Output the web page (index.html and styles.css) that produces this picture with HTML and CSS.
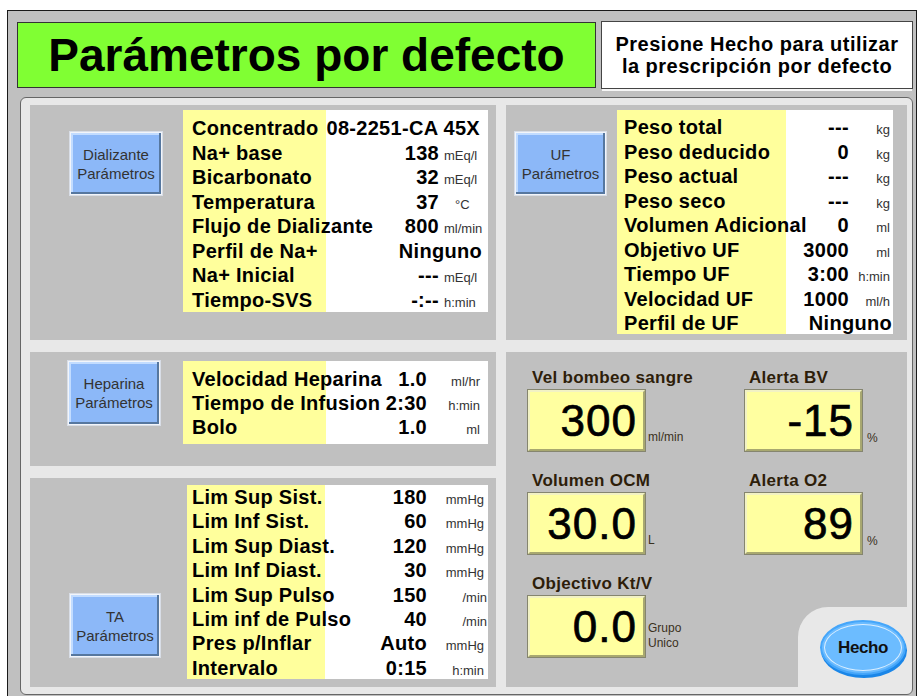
FILE: index.html
```html
<!DOCTYPE html>
<html lang="es">
<head>
<meta charset="utf-8">
<title>Parámetros por defecto</title>
<link rel="stylesheet" href="styles.css">
</head>
<body>
<div class="frame">
  <div class="header">
    <div class="title">Parámetros por defecto</div>
    <div class="hint">Presione Hecho para utilizar<br>la prescripción por defecto</div>
  </div>
  <div class="panel">
    <section class="sec dial">
      <div class="btn">Dializante<br>Parámetros</div>
      <div class="tbl">
        <div class="row"><span class="lbl">Concentrado</span><span class="val wide pr8">08-2251-CA 45X</span></div>
        <div class="row"><span class="lbl">Na+ base</span><span class="val">138</span><span class="unit">mEq/l</span></div>
        <div class="row"><span class="lbl">Bicarbonato</span><span class="val">32</span><span class="unit">mEq/l</span></div>
        <div class="row"><span class="lbl">Temperatura</span><span class="val">37</span><span class="unit deg">°C</span></div>
        <div class="row"><span class="lbl">Flujo de Dializante</span><span class="val">800</span><span class="unit">ml/min</span></div>
        <div class="row"><span class="lbl">Perfil de Na+</span><span class="val wide pr6">Ninguno</span></div>
        <div class="row"><span class="lbl">Na+ Inicial</span><span class="val">---</span><span class="unit">mEq/l</span></div>
        <div class="row"><span class="lbl">Tiempo-SVS</span><span class="val">-:--</span><span class="unit">h:min</span></div>
      </div>
    </section>

    <section class="sec uf">
      <div class="btn">UF<br>Parámetros</div>
      <div class="tbl">
        <div class="row"><span class="lbl">Peso total</span><span class="val">---</span><span class="unit">kg</span></div>
        <div class="row"><span class="lbl">Peso deducido</span><span class="val">0</span><span class="unit">kg</span></div>
        <div class="row"><span class="lbl">Peso actual</span><span class="val">---</span><span class="unit">kg</span></div>
        <div class="row"><span class="lbl">Peso seco</span><span class="val">---</span><span class="unit">kg</span></div>
        <div class="row"><span class="lbl">Volumen Adicional</span><span class="val">0</span><span class="unit">ml</span></div>
        <div class="row"><span class="lbl">Objetivo UF</span><span class="val">3000</span><span class="unit">ml</span></div>
        <div class="row"><span class="lbl">Tiempo UF</span><span class="val">3:00</span><span class="unit">h:min</span></div>
        <div class="row"><span class="lbl">Velocidad UF</span><span class="val">1000</span><span class="unit">ml/h</span></div>
        <div class="row"><span class="lbl">Perfil de UF</span><span class="val wide pr1">Ninguno</span></div>
      </div>
    </section>

    <section class="sec hep">
      <div class="btn">Heparina<br>Parámetros</div>
      <div class="tbl">
        <div class="row"><span class="lbl">Velocidad Heparina</span><span class="val">1.0</span><span class="unit">ml/hr</span></div>
        <div class="row"><span class="lbl">Tiempo de Infusion</span><span class="val">2:30</span><span class="unit">h:min</span></div>
        <div class="row"><span class="lbl">Bolo</span><span class="val">1.0</span><span class="unit">ml</span></div>
      </div>
    </section>

    <section class="sec pump">
      <div class="field">
        <div class="flabel">Vel bombeo sangre</div>
        <div class="fline"><div class="fbox">300</div><span class="funit">ml/min</span></div>
      </div>
      <div class="field">
        <div class="flabel">Alerta BV</div>
        <div class="fline"><div class="fbox">-15</div><span class="funit pct">%</span></div>
      </div>
      <div class="field">
        <div class="flabel">Volumen OCM</div>
        <div class="fline"><div class="fbox">30.0</div><span class="funit">L</span></div>
      </div>
      <div class="field">
        <div class="flabel">Alerta O2</div>
        <div class="fline"><div class="fbox">89</div><span class="funit pct">%</span></div>
      </div>
      <div class="field">
        <div class="flabel">Objectivo Kt/V</div>
        <div class="fline"><div class="fbox">0.0</div><span class="funit">Grupo<br>Unico</span></div>
      </div>
      <div class="cut"><div class="hecho">Hecho</div></div>
    </section>

    <section class="sec ta">
      <div class="btn">TA<br>Parámetros</div>
      <div class="tbl">
        <div class="row"><span class="lbl">Lim Sup Sist.</span><span class="val">180</span><span class="unit">mmHg</span></div>
        <div class="row"><span class="lbl">Lim Inf Sist.</span><span class="val">60</span><span class="unit">mmHg</span></div>
        <div class="row"><span class="lbl">Lim Sup Diast.</span><span class="val">120</span><span class="unit">mmHg</span></div>
        <div class="row"><span class="lbl">Lim Inf Diast.</span><span class="val">30</span><span class="unit">mmHg</span></div>
        <div class="row"><span class="lbl">Lim Sup Pulso</span><span class="val">150</span><span class="unit mn">/min</span></div>
        <div class="row"><span class="lbl">Lim inf de Pulso</span><span class="val">40</span><span class="unit mn">/min</span></div>
        <div class="row"><span class="lbl">Pres p/Inflar</span><span class="val">Auto</span><span class="unit">mmHg</span></div>
        <div class="row"><span class="lbl">Intervalo</span><span class="val">0:15</span><span class="unit">h:min</span></div>
      </div>
    </section>
  </div>
</div>
</body>
</html>
```
FILE: styles.css
```css
* { box-sizing: border-box; }
html, body { margin: 0; padding: 0; background: #fff; }
body {
  font-family: "Liberation Sans", Arial, sans-serif;
  width: 917px;
  height: 696px;
  overflow: hidden;
  color: #000;
}

.frame {
  margin: 10px 0 0 7px;
  width: 910px;
  height: 690px;
  border: 1px solid #1a1a1a;
  background: #c0c0c0;
  padding: 11px 0 0 9px;
}

.header { display: flex; gap: 5px; height: 66px; }
.title {
  width: 579px;
  height: 66px;
  background: #80ff33;
  border: 1px solid #333;
  font-weight: bold;
  font-size: 46px;
  display: flex;
  align-items: center;
  justify-content: center;
  padding-bottom: 1px;
}
.hint {
  width: 312px;
  height: 68px;
  margin-top: -1px;
  background: #fff;
  border: 1px solid #444;
  box-shadow: 0 3px 0 -1px #f6f6f6;
  font-weight: bold;
  font-size: 20px;
  letter-spacing: 0.5px;
  line-height: 22px;
  display: flex;
  align-items: center;
  justify-content: center;
  text-align: center;
}

.panel {
  margin: 9px 0 0 3px;
  width: 893px;
  height: 598px;
  border: 1px solid #666;
  border-radius: 6px;
  background: #e8e8e8;
  padding: 7px 5px 6px 9px;
  display: grid;
  grid-template-columns: 466px 401px;
  grid-template-rows: 235px 114px 209px;
  gap: 12px 10px;
}

.sec {
  background: #c0c0c0;
  position: relative;
  display: flex;
  align-items: flex-start;
}
.dial { grid-column: 1; grid-row: 1; }
.uf { grid-column: 2; grid-row: 1; }
.hep { grid-column: 1; grid-row: 2; }
.ta { grid-column: 1; grid-row: 3; }
.pump { grid-column: 2; grid-row: 2 / 4; }

/* blue buttons */
.btn {
  flex: none;
  width: 92px;
  height: 63px;
  border: 1px solid #f2f5fa;
  background: #8cb8f8;
  box-shadow: inset -2px -2px 0 #56779f, inset 2px 2px 0 #c2dcff, 0 0 0 1px #d8dde6;
  display: flex;
  align-items: center;
  justify-content: center;
  text-align: center;
  font-size: 15px;
  line-height: 19px;
  color: #333;
}

/* data tables */
.tbl {
  flex: none;
  background: linear-gradient(to right, #ffff9c var(--y), #fff var(--y));
}
.row {
  display: flex;
  align-items: baseline;
  height: var(--rh);
  line-height: var(--rh);
  white-space: nowrap;
}
.lbl {
  flex: 1 1 0;
  min-width: 0;
  font-weight: bold;
  font-size: 20px;
  letter-spacing: 0.3px;
}
.val {
  flex: none;
  width: 60px;
  text-align: right;
  font-weight: bold;
  font-size: 20px;
  letter-spacing: 0.3px;
}
.val.wide { width: auto; }
.pr8 { padding-right: 8px; }
.pr6 { padding-right: 6px; }
.pr1 { padding-right: 1px; }
.unit {
  flex: none;
  width: var(--uw);
  font-size: 13px;
  color: #333;
}

.dial .btn { margin: 27px 0 0 40px; }
.dial .tbl { margin: 5px 0 0 21px; width: 305px; height: 202px; padding: 6px 0 0 9px; --y: 143px; --rh: 24.5px; --uw: 49px; }
.dial .unit { padding-left: 5px; }
.dial .unit.deg { padding-left: 16px; }

.uf .btn { margin: 27px 0 0 9px; width: 91px; }
.uf .tbl { margin: 5px 0 0 11px; width: 276px; height: 224px; padding: 5px 0 0 7px; --y: 169px; --rh: 24.5px; --uw: 44px; }
.uf .unit { text-align: right; padding-right: 3px; }

.hep .btn { margin: 9px 0 0 38px; height: 64px; }
.hep .tbl { margin: 9px 0 0 23px; width: 305px; height: 83px; padding: 6px 0 0 9px; --y: 143px; --rh: 24px; --uw: 61px; }
.hep .unit { text-align: right; padding-right: 8px; }

.ta .btn { margin: 116px 0 0 40px; width: 90px; }
.ta .tbl { margin: 7px 0 0 27px; width: 301px; height: 194px; padding: 0 0 0 5px; --y: 138px; --rh: 24.4px; --uw: 61px; }
.ta .unit { text-align: right; padding-right: 4px; }
.ta .unit.mn { padding-right: 1px; }

/* pump fields */
.pump {
  display: grid;
  grid-template-columns: 217px 150px;
  grid-auto-rows: max-content;
  row-gap: 19px;
  align-content: start;
  padding: 16px 0 0 21px;
}
.flabel {
  margin: 0 0 1px 5px;
  height: 20px;
  line-height: 20px;
  font-weight: bold;
  font-size: 17px;
  letter-spacing: 0.3px;
  color: #2e1e0a;
  white-space: nowrap;
}
.fline { display: flex; }
.fbox {
  flex: none;
  width: 119px;
  height: 63px;
  background: #ffffa0;
  border: 3px solid;
  border-color: #f2f2c4 #a8a870 #a8a870 #f2f2c4;
  outline: 1px solid #85856f;
  outline-offset: -1px;
  text-align: right;
  padding-right: 6px;
  font-size: 44px;
  letter-spacing: 1px;
  line-height: 57px;
  -webkit-text-stroke: 0.7px #000;
}
.funit {
  align-self: flex-end;
  margin: 0 0 7px 2px;
  font-size: 12px;
  line-height: 15px;
  color: #3a3020;
}
.funit.pct { margin-left: 4px; margin-bottom: 6px; }

.cut {
  position: absolute;
  right: 0;
  bottom: 0;
  width: 109px;
  height: 80px;
  background: #e8e8e8;
  border-top-left-radius: 30px;
}
.hecho {
  position: absolute;
  left: 22px;
  top: 13px;
  width: 86px;
  height: 55px;
  border-radius: 50%;
  background: #6cbcff;
  border: 2px solid #45a6fa;
  box-shadow: 1px 3px 0 0 #1a86e8;
  display: flex;
  align-items: center;
  justify-content: center;
  font-weight: bold;
  font-size: 17px;
  letter-spacing: -0.4px;
  color: #111;
}
.hecho::before {
  content: "";
  position: absolute;
  inset: 2px;
  border-radius: 50%;
  border: 1px solid rgba(255, 255, 255, 0.75);
}
```
